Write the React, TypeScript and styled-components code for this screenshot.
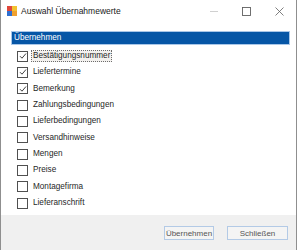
import React from 'react';
import styled, {createGlobalStyle} from 'styled-components';

const GlobalStyle = createGlobalStyle`
    html, body {
        margin: 0;
        padding: 0;
        background: #ffffff;
    }
    body {
        font-family: "Liberation Sans", Arial, sans-serif;
        font-size: 8px;
        color: #1b1b1b;
    }
`;

const Window = styled.div`
    width: 295px;
    height: 250px;
    border-left: 1px solid #8f8f8f;
    border-right: 1px solid #8f8f8f;
    background: #ffffff;
    display: flex;
    flex-direction: column;
    overflow: hidden;
`;

const TitleBar = styled.div`
    height: 22px;
    flex: none;
    display: flex;
    align-items: center;
    padding-left: 6px;
`;

const TitleText = styled.div`
    margin-left: 4px;
    font-size: 8.5px;
    color: #202020;
    flex: 1;
`;

const CaptionButton = styled.div`
    width: 33px;
    height: 22px;
    display: flex;
    align-items: center;
    justify-content: center;
`;

const Content = styled.div`
    flex: 1;
    padding: 10px 7px 0 11px;
    display: flex;
    flex-direction: column;
`;

const ListHeader = styled.div`
    height: 12px;
    line-height: 12px;
    background: #0656a6;
    outline: 1px solid #a9c7e8;
    color: #ffffff;
    padding-left: 2px;
    font-size: 8.2px;
`;

const Items = styled.div`
    padding-top: 4px;
    padding-left: 5px;
    display: flex;
    flex-direction: column;
`;

const Row = styled.div`
    height: 16.33px;
    display: flex;
    align-items: center;
`;

const Box = styled.div`
    width: 9px;
    height: 9px;
    border: 1px solid #505050;
    background: #ffffff;
    flex: none;
    display: flex;
    align-items: center;
    justify-content: center;
`;

const Label = styled.span<{ $focused?: boolean }>`
    margin-left: 3px;
    padding: 0 1px;
    line-height: 10px;
    font-size: 8.2px;
    color: #1f1f1f;
    border: 1px ${(props) => props.$focused ? 'dotted #6c6c6c' : 'solid transparent'};
    background: ${(props) => props.$focused ? '#f3f1ee' : 'transparent'};
`;

const Footer = styled.div`
    height: 35px;
    flex: none;
    background: #f0f0f0;
    display: flex;
    justify-content: flex-end;
    align-items: flex-start;
    gap: 13px;
    padding: 11px 8px 0 0;
    box-sizing: border-box;
`;

const Button = styled.div<{ $width: number }>`
    width: ${(props) => props.$width}px;
    height: 14px;
    box-sizing: border-box;
    border: 1px solid #b3cae6;
    background: #f4f4f4;
    color: #555555;
    font-size: 8px;
    display: flex;
    align-items: center;
    justify-content: center;
`;

const AppIcon = () => (
    <svg width="10" height="10" viewBox="0 0 10 10">
        <rect x="0" y="0" width="5" height="5" fill="#e0463a"/>
        <rect x="5" y="0" width="5" height="5" fill="#f2c230"/>
        <rect x="0" y="5" width="5" height="5" fill="#2f6fd0"/>
        <rect x="5" y="5" width="5" height="5" fill="#f0a030"/>
    </svg>
);

const Check = () => (
    <svg width="8" height="8" viewBox="0 0 8 8">
        <path d="M1 4.2 L3 6.2 L7 1.5" stroke="#2b2b2b" strokeWidth="0.9" fill="none"/>
    </svg>
);

const items = [
    {label: 'Bestätigungsnummer', checked: true, focused: true},
    {label: 'Liefertermine', checked: true},
    {label: 'Bemerkung', checked: true},
    {label: 'Zahlungsbedingungen'},
    {label: 'Lieferbedingungen'},
    {label: 'Versandhinweise'},
    {label: 'Mengen'},
    {label: 'Preise'},
    {label: 'Montagefirma'},
    {label: 'Lieferanschrift'},
];

const App = () => {
    return (
        <Window>
            <GlobalStyle/>
            <TitleBar>
                <AppIcon/>
                <TitleText>Auswahl Übernahmewerte</TitleText>
                <CaptionButton>
                    <svg width="8" height="8" viewBox="0 0 8 8">
                        <line x1="0" y1="4.5" x2="8" y2="4.5" stroke="#d0d0d0" strokeWidth="1"/>
                    </svg>
                </CaptionButton>
                <CaptionButton>
                    <svg width="9" height="9" viewBox="0 0 9 9">
                        <rect x="0.5" y="0.5" width="8" height="8" stroke="#606060" fill="none" strokeWidth="0.9"/>
                    </svg>
                </CaptionButton>
                <CaptionButton>
                    <svg width="9" height="9" viewBox="0 0 9 9">
                        <path d="M0.5 0.5 L8.5 8.5 M8.5 0.5 L0.5 8.5" stroke="#606060" strokeWidth="0.8"/>
                    </svg>
                </CaptionButton>
            </TitleBar>
            <Content>
                <ListHeader>Übernehmen</ListHeader>
                <Items>
                    {items.map(item =>
                        <Row key={item.label}>
                            <Box>{item.checked && <Check/>}</Box>
                            <Label $focused={item.focused}>{item.label}</Label>
                        </Row>
                    )}
                </Items>
            </Content>
            <Footer>
                <Button $width={50}>Übernehmen</Button>
                <Button $width={61}>Schließen</Button>
            </Footer>
        </Window>
    );
};

export default App;
